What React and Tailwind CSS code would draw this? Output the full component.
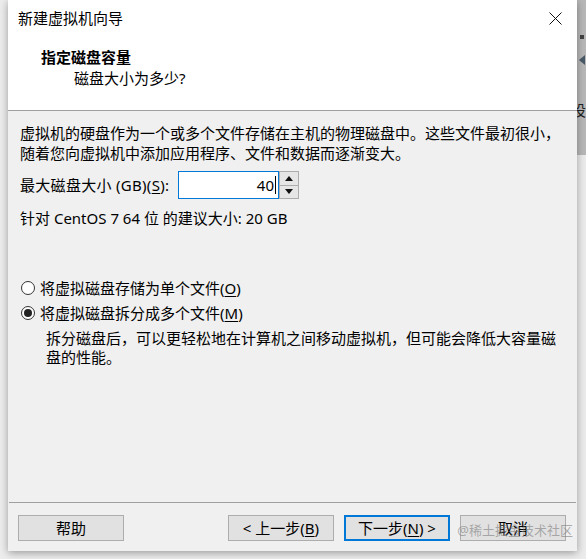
import React from "react";

const U = ({ children }) => <span className="underline underline-offset-2">{children}</span>;

function Radio({ checked, children }) {
  return (
    <div className="flex items-center h-5">
      <span className="ml-[13px] w-[14px] h-[14px] rounded-full border border-[#333] bg-white flex items-center justify-center">
        {checked && <span className="w-[8px] h-[8px] rounded-full bg-[#222]" />}
      </span>
      <span className="ml-[5px]">{children}</span>
    </div>
  );
}

function Btn({ children, def }) {
  return (
    <div
      className={
        "w-[106px] h-[26px] flex items-center justify-center bg-[#e1e1e1] " +
        (def ? "border-2 border-[#0078d7]" : "border border-[#adadad]")
      }
    >
      {children}
    </div>
  );
}

export default function App() {
  return (
    <div className="w-[586px] h-[559px] bg-[#ededed] flex overflow-hidden font-['Noto_Sans','Noto_Sans_CJK_SC',sans-serif] text-[15px] leading-5 text-black">
      <div className="w-[8px] shrink-0" />
      <div className="w-[569px] h-[551px] shrink-0 flex flex-col bg-[#f0f0f0] shadow-[0_2px_8px_rgba(0,0,0,0.35)] relative z-10">
        {/* Title + header (white) */}
        <div className="bg-white h-[110px] flex flex-col">
          <div className="h-[36px] flex items-center justify-between pl-[10px] pr-[15px]">
            <span>新建虚拟机向导</span>
            <svg width="13" height="13" viewBox="0 0 13 13">
              <path d="M0.5 0.5 L12.5 12.5 M12.5 0.5 L0.5 12.5" stroke="#111" strokeWidth="1" fill="none" />
            </svg>
          </div>
          <div className="pl-[33px] pt-[11px] font-bold">指定磁盘容量</div>
          <div className="pl-[66px] mt-px">磁盘大小为多少?</div>
        </div>
        <div className="h-px bg-[#a0a0a0]" />
        {/* Body */}
        <div className="flex-1 flex flex-col pl-[12px] pr-[10px]">
          <div className="pt-[12px]">
            <div className="whitespace-nowrap">虚拟机的硬盘作为一个或多个文件存储在主机的物理磁盘中。这些文件最初很小，</div>
            <div className="whitespace-nowrap">随着您向虚拟机中添加应用程序、文件和数据而逐渐变大。</div>
          </div>
          <div className="mt-[8px] flex items-center h-[28px]">
            <span className="w-[158px] shrink-0 whitespace-nowrap tracking-[0.3px]">最大磁盘大小 (GB)(<U>S</U>):</span>
            <div className="w-[101px] h-[28px] border border-[#0078d7] bg-white flex items-center justify-end pr-[2px]">
              <span>40</span>
              <span className="w-px h-[18px] bg-black ml-px" />
            </div>
            <div className="w-[20px] h-[28px] flex flex-col border border-[#adadad] bg-[#f0f0f0]">
              <div className="flex-1 flex items-center justify-center border-b border-[#adadad] bg-[#e6e6e6]">
                <svg width="8" height="5" viewBox="0 0 8 5"><path d="M4 0 L8 5 L0 5 Z" fill="#111" /></svg>
              </div>
              <div className="flex-1 flex items-center justify-center bg-[#e6e6e6]">
                <svg width="8" height="5" viewBox="0 0 8 5"><path d="M0 0 L8 0 L4 5 Z" fill="#111" /></svg>
              </div>
            </div>
          </div>
          <div className="mt-[9px] whitespace-nowrap">针对 CentOS 7 64 位 的建议大小: 20 GB</div>
          <div className="mt-[50px] -ml-[12px]">
            <Radio>将虚拟磁盘存储为单个文件(<U>O</U>)</Radio>
          </div>
          <div className="mt-[5px] -ml-[12px]">
            <Radio checked>将虚拟磁盘拆分成多个文件(<U>M</U>)</Radio>
          </div>
          <div className="mt-[6px] pl-[26px] leading-[19px]">
            <div className="whitespace-nowrap">拆分磁盘后，可以更轻松地在计算机之间移动虚拟机，但可能会降低大容量磁</div>
            <div>盘的性能。</div>
          </div>
        </div>
        {/* Footer */}
        <div className="mx-px h-px bg-[#a0a0a0]" />
        <div className="h-[48px] flex pt-[12px] pl-[10px] pr-[11px] relative">
          <Btn>帮助</Btn>
          <div className="flex-1" />
          <div className="flex gap-[10px]">
            <Btn>&lt; 上一步(<U>B</U>)</Btn>
            <Btn def>下一步(<U>N</U>) &gt;</Btn>
            <Btn>取消</Btn>
          </div>
          <div className="absolute right-[4px] top-[19px] text-[13px] leading-4 text-[rgba(125,125,125,0.6)] whitespace-nowrap">@稀土掘金技术社区</div>
        </div>
      </div>
      <div className="w-[9px] shrink-0 flex flex-col">
        <div className="h-[155px] bg-[#b8b8b8] flex flex-col overflow-hidden">
          <div className="mt-[35px] ml-[3px] w-[4px] h-[4px] bg-[#444]" />
          <div className="mt-[16px] ml-[2px] w-0 h-0 border-y-[5px] border-y-transparent border-r-[6px] border-r-[#4a5a68]" />
          <div className="mt-[35px] -ml-[6px] text-[15px] text-[#222]">设</div>
        </div>
        <div className="flex-1 bg-[#ececec]" />
      </div>
    </div>
  );
}
